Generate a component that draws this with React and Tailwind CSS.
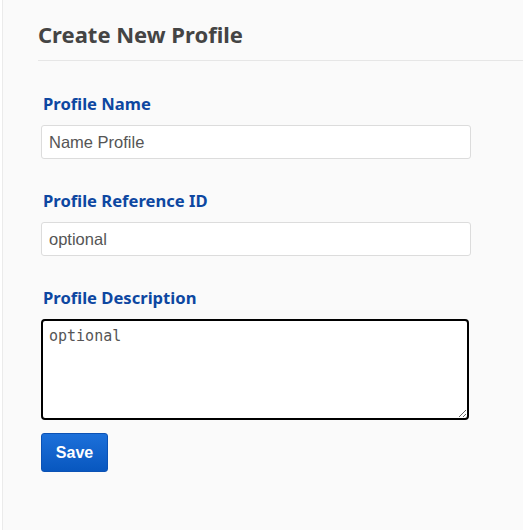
import React, { useState } from 'react';

const labelCls =
  "block ml-[2px] mb-[9px] text-[16.6px] leading-[24px] font-bold text-[#0d47a1] [font-family:'Noto_Sans',sans-serif]";
const inputCls =
  "block w-[430px] h-[34px] px-[7px] border border-[#dcdcdc] rounded-[3px] bg-white text-[16.5px] text-[#555] outline-none [font-family:'Liberation_Sans',Arial,sans-serif]";

export default function App() {
  const [name, setName] = useState('Name Profile');
  const [refId, setRefId] = useState('optional');
  const [desc, setDesc] = useState('');

  return (
    <div className="w-full h-[530px] bg-white pl-[2px]">
      <div className="h-full border-l border-[#ebebeb] bg-[#fafafa] pl-[35px] pt-[18px]">
        <div className="border-b border-[#e6e6e6] pb-[10px]">
          <h1 className="text-[22px] leading-[32px] font-bold text-[#444] [font-family:'Noto_Sans',sans-serif]">
            Create New Profile
          </h1>
        </div>

        <form className="pl-[3px] pt-[31px]" onSubmit={(e) => e.preventDefault()}>
          <label className={labelCls}>Profile Name</label>
          <input
            type="text"
            value={name}
            onChange={(e) => setName(e.target.value)}
            className={inputCls}
          />

          <label className={labelCls + ' mt-[30px]'}>Profile Reference ID</label>
          <input
            type="text"
            value={refId}
            onChange={(e) => setRefId(e.target.value)}
            className={inputCls}
          />

          <label className={labelCls + ' mt-[30px]'}>Profile Description</label>
          <textarea
            value={desc}
            onChange={(e) => setDesc(e.target.value)}
            placeholder="optional"
            className="block w-[428px] h-[101px] px-[6px] py-[5px] border-2 border-black rounded-[4px] bg-white text-[15px] leading-[20px] text-[#555] placeholder:text-[#555] outline-none [font-family:'DejaVu_Sans_Mono',monospace]"
          />

          <button
            type="submit"
            className="mt-[13px] w-[67px] h-[39px] rounded-[3px] border border-[#0b52b5] bg-gradient-to-b from-[#1c70da] to-[#0857bf] text-white text-[16px] font-bold [font-family:'Liberation_Sans',Arial,sans-serif]"
          >
            Save
          </button>
        </form>
      </div>
    </div>
  );
}
